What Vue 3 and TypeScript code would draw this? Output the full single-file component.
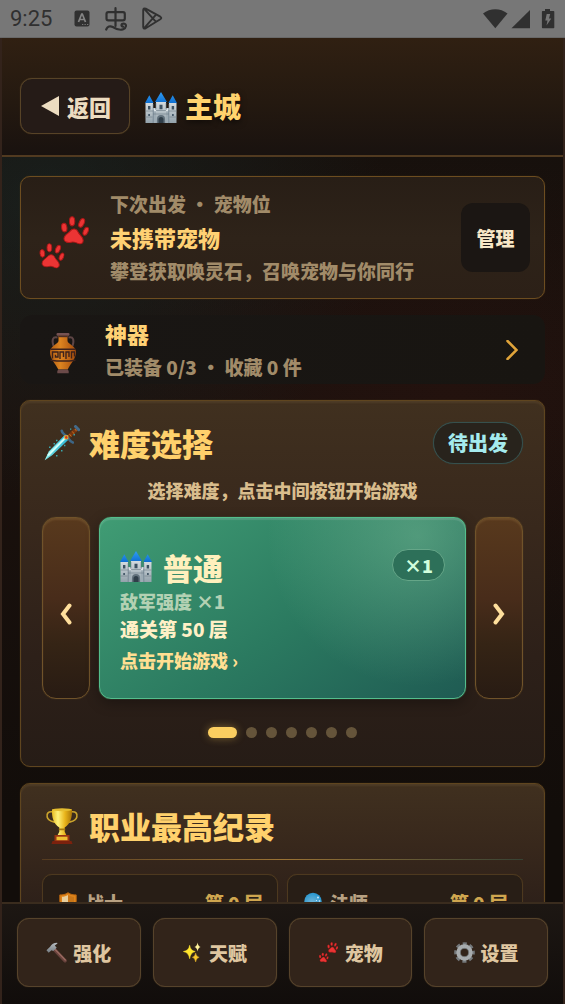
<script setup lang="ts">
import { ref } from 'vue'

interface NavItem {
  icon: string
  label: string
}
interface ClassRecord {
  icon: string
  name: string
  floor: number
}

const navItems: NavItem[] = [
  { icon: 'hammer', label: '强化' },
  { icon: 'sparkles', label: '天赋' },
  { icon: 'paws', label: '宠物' },
  { icon: 'gear', label: '设置' },
]
const records: ClassRecord[] = [
  { icon: 'shield', name: '战士', floor: 0 },
  { icon: 'orb', name: '法师', floor: 0 },
]
const slideCount = 7
const current = ref(0)

function move(step: number) {
  current.value = (current.value + step + slideCount) % slideCount
}
</script>

<template>
  <div class="screen">
    <svg class="sprite" aria-hidden="true">
      <defs>
        <linearGradient id="roof" x1="0" y1="0" x2="0" y2="1"><stop offset="0" stop-color="#2f9df5" /><stop offset="1" stop-color="#0f6fd0" /></linearGradient>
        <linearGradient id="stone" x1="0" y1="0" x2="0" y2="1"><stop offset="0" stop-color="#d3dade" /><stop offset="1" stop-color="#93a2ab" /></linearGradient>
        <linearGradient id="blade" x1="0" y1="1" x2="1" y2="0"><stop offset="0" stop-color="#a8fff3" /><stop offset="1" stop-color="#27b9e0" /></linearGradient>
        <linearGradient id="clay" x1="0" y1="0" x2="1" y2="0"><stop offset="0" stop-color="#b35c12" /><stop offset="0.4" stop-color="#dd8420" /><stop offset="1" stop-color="#a34a0c" /></linearGradient>
        <linearGradient id="gold" x1="0" y1="0" x2="1" y2="0"><stop offset="0" stop-color="#e8bc22" /><stop offset="0.3" stop-color="#fff27a" /><stop offset="0.65" stop-color="#e9b41a" /><stop offset="1" stop-color="#a87408" /></linearGradient>
        <linearGradient id="steel" x1="0" y1="0" x2="0" y2="1"><stop offset="0" stop-color="#b6bcc0" /><stop offset="1" stop-color="#747c82" /></linearGradient>
        <radialGradient id="orbFill" cx="0.45" cy="0.6" r="0.6"><stop offset="0" stop-color="#79b9d8" /><stop offset="1" stop-color="#2796cf" /></radialGradient>
      </defs>

      <symbol id="castle" viewBox="0 0 32 32">
        <rect x="7" y="16" width="18" height="15" fill="#9dabb4" />
        <rect x="0.5" y="11" width="7.5" height="20" fill="url(#stone)" />
        <rect x="24" y="11" width="7.5" height="20" fill="url(#stone)" />
        <rect x="11" y="10" width="10" height="21" fill="url(#stone)" />
        <path d="M0 11L4.3 3.3L8.6 11ZM23.4 11L27.7 3.3L32 11ZM10 10L16 0L22 10Z" fill="url(#roof)" />
        <path d="M8 17h1.5v1.5H11V17M21 17v1.5h1.5V17H24" stroke="#dde3e6" stroke-width="1.4" fill="none" />
        <path d="M0.5 19h7.5M24 19h7.5M11 18.5h10M0.5 25h7M24.5 25h7M8 22h16" stroke="#71808b" stroke-width="0.8" opacity="0.8" />
        <path d="M8.2 12v19M23.8 12v19M10.9 11v7M21.1 11v7" stroke="#627381" stroke-width="0.6" />
        <path d="M12 31v-4a4 4 0 0 1 8 0v4Z" fill="#62717c" />
        <path d="M13.5 31v-3.5a2.5 2.5 0 0 1 5 0V31Z" fill="#303e49" />
        <path d="M3 14h2.4v3.5H3ZM26.7 14h2.4v3.5h-2.4ZM14.5 12.8h3v4.5h-3ZM3.3 22h1.6v2H3.3ZM27.1 22h1.6v2h-1.6Z" fill="#3c5162" />
      </symbol>

      <symbol id="pawOne" viewBox="0 0 28 28">
        <g fill="#eb3434" stroke="#ad1717" stroke-width="1">
          <ellipse cx="3.7" cy="11.4" rx="2.6" ry="4.2" transform="rotate(-8 3.7 11.4)" />
          <ellipse cx="11.4" cy="5.2" rx="2.6" ry="4.5" />
          <ellipse cx="20.8" cy="6.8" rx="2.4" ry="4.5" transform="rotate(24 20.8 6.8)" />
          <ellipse cx="24.8" cy="15" rx="2.2" ry="4.2" transform="rotate(24 24.8 15)" />
          <path d="M9.500 14.800c2.600-3 6.400-2.400 7.800.9 1.100 2.800 5 4.800 5 8.300 0 2.700-2.300 4.100-4.700 3.100-2.500-1.200-4.500-1.900-7.100-1.300-3.300.8-7-.2-7.100-3.300-.1-4 4.100-5.200 6.100-7.700Z" />
        </g>
      </symbol>
      <symbol id="paws" viewBox="0 0 50 54">
        <use href="#pawOne" x="21.5" y="0" width="28.5" height="28.5" />
        <use href="#pawOne" x="0" y="27" width="25.5" height="25.5" />
      </symbol>

      <symbol id="amphora" viewBox="0 0 28 42">
        <path d="M8.500 5.500C3.500 4.300 2.600 8 4.500 14M19.500 5.500C24.500 4.300 25.400 8 23.500 14" fill="none" stroke="#5d4545" stroke-width="2" />
        <path d="M9.500 3.500h9v5.200c0 3.200 8.300 5 8.500 11.100.2 7-5.400 11.500-8.300 17.700H9.300C6.400 31.300.8 26.800 1 19.800 1.200 13.700 9.500 11.900 9.500 8.700Z" fill="url(#clay)" />
        <rect x="7.500" y="1" width="13" height="2.800" rx="1.200" fill="#765252" />
        <rect x="9.500" y="3.600" width="9" height="1.600" fill="#4b2d27" />
        <path d="M1.500 17.300h25M1.500 28.200q12.500 1.800 25 0" fill="none" stroke="#3d221c" stroke-width="1.500" />
        <path d="M3.500 26.500v-6.500h5.500v5H6.500v-2.300M11 27v-7h3.500v5M17 27v-7h3v5M22.500 26.500v-6.500h3v4.600" fill="none" stroke="#3d221c" stroke-width="1.400" />
        <path d="M9.300 37.500h9.400l1 1.500v2.200H8.300V39Z" fill="#6b4a49" />
      </symbol>

      <symbol id="dagger" viewBox="0 0 36 36">
        <path d="M0.700 35.300L4.800 26.400L20.200 10.600L24 15L8.300 30Z" fill="url(#blade)" />
        <path d="M0.700 35.300L22.300 12.600L24 15L8.300 30Z" fill="#2db1cc" opacity="0.500" />
        <path d="M4 30.500L21 13.200" stroke="#d1fff9" stroke-width="2" />
        <path d="M24.200 11.800L33.700 3.200" stroke="#76350e" stroke-width="3.600" />
        <path d="M25.400 9l2 2.500M28.200 6.400l2 2.500M31 4l1.500 2.200" stroke="#c56b21" stroke-width="1" />
        <path d="M17.700 5.700c.3 3.200 2.900 3.500 5.200 5.800s2.600 5 5.900 6" fill="none" stroke="#3d6686" stroke-width="2.600" stroke-linecap="round" />
        <path d="M31.500 1.500l3.200 3.200" stroke="#436b8a" stroke-width="3" stroke-linecap="round" />
        <rect x="20.300" y="10.300" width="4" height="4" fill="#f1b82e" /><circle cx="22.300" cy="12.400" r="1.300" fill="#d23720" />
        <path d="M5 21.500h1.600v1.600H5ZM12 14.800h1.500v1.500H12ZM9.500 18h1.500v1.500H9.500ZM17 25h1.500v1.500H17ZM12 30h1.500v1.500H12ZM29.500 9h1.400v1.400h-1.400ZM26 3.500h1.300v1.300H26ZM20 19.800h1.400v1.400H20Z" fill="#3ca8ac" />
      </symbol>

      <symbol id="trophy" viewBox="0 0 32 36">
        <path d="M7.500 4C2 3 .3 5.500 1.200 9.100c1 4.200 5.300 4.300 8.700 5.400M24.500 4C30 3 31.700 5.500 30.800 9.100c-1 4.200-5.300 4.300-8.700 5.400" fill="none" stroke="#caa32c" stroke-width="1.700" />
        <path d="M6 1.500h20c.4 7.700-1.600 14.500-7.300 18v4.200l2.100 4.400h-9.600l2.100-4.400v-4.200C7.600 16 5.600 9.200 6 1.500Z" fill="url(#gold)" />
        <ellipse cx="16" cy="1.700" rx="10" ry="1.500" fill="#e5bd2f" />
        <path d="M12.800 20.500h6.400v1.800h-6.400Z" fill="#a6780c" />
        <path d="M8.500 27h15v6.500h-15Z" fill="#9a3514" />
        <path d="M10.500 28.700h11v3.500h-11Z" fill="#eebf31" />
        <path d="M6.500 33h19l1 3h-21Z" fill="#7c210d" />
      </symbol>

      <symbol id="hammer" viewBox="0 0 22 22">
        <path d="M8.200 7.300L20 19.600" stroke="#68423c" stroke-width="3.600" stroke-linecap="round" />
        <path d="M8.600 6.800L20.200 18.800" stroke="#9a6a60" stroke-width="1.400" stroke-linecap="round" />
        <path d="M.5 8.700L4.300 4.900C6 2.400 8 .9 11.700.8L12 1.700 9.200 3.600 11.200 6 7.600 9.500 5.800 8.600 2.800 11.200Z" fill="url(#steel)" />
      </symbol>
      <symbol id="sparkles" viewBox="0 0 20 22">
        <path d="M7 3.500Q7.800 9 12.800 10Q7.800 11 7 17.500Q6.200 11 0.500 10Q6.200 9 7 3.500Z" fill="#ffe52d" stroke="#ffe52d" stroke-width="0.600" />
        <path d="M15.300 .5Q15.900 4.500 18.500 5.200Q15.900 6 15.300 10Q14.700 6 12 5.200Q14.700 4.500 15.300 .5Z" fill="#fff29b" />
        <path d="M13.300 11.500Q14 15.500 17 16Q14 16.700 13.300 21Q12.600 16.700 9.800 16Q12.600 15.500 13.300 11.500Z" fill="#f9c52c" stroke="#f9c52c" stroke-width="0.400" />
      </symbol>
      <symbol id="gear" viewBox="0 0 22 22">
        <circle cx="11" cy="11" r="9.200" fill="none" stroke="#74787b" stroke-width="3.200" stroke-dasharray="4.200 3.026" stroke-dashoffset="2.100" />
        <circle cx="11" cy="11" r="6.400" fill="none" stroke="#a7abad" stroke-width="4.400" />
        <circle cx="11" cy="11" r="4.300" fill="none" stroke="#6d7174" stroke-width="0.900" />
      </symbol>
      <symbol id="shield" viewBox="0 0 18 20">
        <path d="M9 .7C6.300 2.700 3.800 2.900.8 2.900v6.600c0 5.200 3.200 8.200 8.200 9.800 5-1.600 8.200-4.600 8.200-9.800V2.900C14.200 2.900 11.700 2.700 9 .7Z" fill="#df841b" stroke="#b9660f" />
        <path d="M9 3C7 4.300 5.300 4.700 3 4.800v5c0 3.700 2.200 6 6 7.400Z" fill="#e8cf9d" />
        <path d="M9 3c2 1.300 3.700 1.700 6 1.800v5c0 3.700-2.200 6-6 7.400Z" fill="#c97719" />
      </symbol>
      <symbol id="orb" viewBox="0 0 18 20">
        <circle cx="9" cy="9.500" r="8.700" fill="url(#orbFill)" />
        <circle cx="14" cy="5.500" r="0.900" fill="#d7efff" /><circle cx="15.500" cy="9" r="0.800" fill="#d7efff" /><circle cx="12.500" cy="8.500" r="0.600" fill="#d7efff" />
      </symbol>
    </svg>

    <div class="status">
      <span class="clock">9:25</span>
      <svg class="st-box" viewBox="0 0 16 17" aria-hidden="true">
        <rect x="0.500" y="0.500" width="15" height="16" rx="2" fill="#303030" />
        <path d="M4.500 12L7.700 4H8.300L11.500 12M5.700 9.500H10.300" fill="none" stroke="#858585" stroke-width="1.700" />
        <path d="M8 14.500h1.300M10.500 14.500h1.300M13 14.500h1.300" stroke="#757575" stroke-width="1" />
      </svg>
      <svg class="st-worm" viewBox="0 0 22 24" aria-hidden="true">
        <path d="M10.500 1.200V19M3.300 5.200H18Q19.800 5.200 19.800 7V11.600Q19.800 13.400 18 13.400H3.300Q1.500 13.400 1.500 11.600V7Q1.500 5.200 3.300 5.200Z" fill="none" stroke="#303030" stroke-width="2.200" stroke-linecap="round" />
        <path d="M1.200 22.500C2.500 19.500 5 18.500 7.800 20C11 22 14.700 23.700 18.200 22.200C21.500 20.800 22 16.800 18.800 16.500C16 16.500 15.800 19.500 18 19.600" fill="none" stroke="#303030" stroke-width="2.200" stroke-linecap="round" />
      </svg>
      <svg class="st-play" viewBox="0 0 21 23" aria-hidden="true">
        <path d="M1.200 3.200Q1.200.5 3.700 1.700L18.300 9.700Q20.300 11 18.300 12.300L3.700 21.300Q1.200 22.500 1.200 19.800ZM2 1.700L14 14.800M2 21.300L14 7.600" fill="none" stroke="#303030" stroke-width="1.900" stroke-linejoin="round" />
      </svg>
      <svg class="st-right" viewBox="0 0 72 20" aria-hidden="true">
        <path d="M0 4.500C7-1.200 17.500-1.200 24.500 4.500L12.300 19.300Z" fill="#303030" />
        <path d="M28.500 19.300L47 1V19.300Z" fill="#303030" />
        <path d="M62 0h5v2h3.500q.8 0 .8.800v15.700q0 .8-.8.800H59.700q-.8 0-.8-.8V2.800q0-.8.8-.8H62Z" fill="#303030" />
        <path d="M63.700 5h3.500l-1.200 4.500h2.300L63.500 16.500l1-5h-2.200Z" fill="#777" />
      </svg>
    </div>

    <div class="app">
      <header class="top">
        <button class="back" type="button">
          <svg class="tri" viewBox="0 0 18 20" aria-hidden="true"><path d="M18 0V20L0 10Z" fill="#ecdcc0" /></svg>
          返回
        </button>
        <h1><svg class="ico32" aria-hidden="true"><use href="#castle" /></svg>主城</h1>
      </header>

      <main>
        <section class="panel pet">
          <svg class="pet-ico" aria-hidden="true"><use href="#paws" /></svg>
          <div class="pet-copy">
            <p class="muted">下次出发 · 宠物位</p>
            <h2>未携带宠物</h2>
            <p class="muted">攀登获取唤灵石，召唤宠物与你同行</p>
          </div>
          <button class="manage" type="button">管理</button>
        </section>

        <button class="relic" type="button">
          <svg class="relic-ico" aria-hidden="true"><use href="#amphora" /></svg>
          <span class="relic-copy">
            <strong>神器</strong>
            <span class="muted">已装备 0/3 · 收藏 0 件</span>
          </span>
          <svg class="go" viewBox="0 0 12 20" aria-hidden="true"><path d="M1.500 1L10.500 10L1.500 19" fill="none" stroke="#e0a43a" stroke-width="2.500" stroke-linecap="round" /></svg>
        </button>

        <section class="panel rich">
          <div class="head">
            <h2><svg class="ico36" aria-hidden="true"><use href="#dagger" /></svg>难度选择</h2>
            <span class="state">待出发</span>
          </div>
          <p class="hint">选择难度，点击中间按钮开始游戏</p>
          <div class="carousel">
            <button class="arrow" type="button" aria-label="上一个" @click="move(-1)">
              <svg viewBox="0 0 12 22" aria-hidden="true"><path d="M9.500 2.500L3 11L9.500 19.500" fill="none" stroke="#ffdf9c" stroke-width="4" stroke-linecap="round" /></svg>
            </button>
            <button class="mode" type="button">
              <span class="mode-head">
                <svg class="ico32" aria-hidden="true"><use href="#castle" /></svg>
                <span class="mode-name">普通</span>
                <span class="times">×1</span>
              </span>
              <span class="mode-power">敌军强度 ×1</span>
              <span class="mode-goal">通关第 50 层</span>
              <span class="mode-start">点击开始游戏 ›</span>
            </button>
            <button class="arrow" type="button" aria-label="下一个" @click="move(1)">
              <svg viewBox="0 0 12 22" aria-hidden="true"><path d="M2.500 2.500L9 11L2.500 19.500" fill="none" stroke="#ffdf9c" stroke-width="4" stroke-linecap="round" /></svg>
            </button>
          </div>
          <div class="dots">
            <i v-for="n in slideCount" :key="n" :class="{ on: n - 1 === current }"></i>
          </div>
        </section>

        <section class="panel rich">
          <div class="head">
            <h2><svg class="ico36" aria-hidden="true"><use href="#trophy" /></svg>职业最高纪录</h2>
          </div>
          <div class="rule"></div>
          <ul class="records">
            <li v-for="r in records" :key="r.name">
              <svg class="rec-ico" aria-hidden="true"><use :href="'#' + r.icon" /></svg>
              <span class="rec-name">{{ r.name }}</span>
              <span class="rec-floor">第 {{ r.floor }} 层</span>
            </li>
          </ul>
        </section>
      </main>

      <nav>
        <button v-for="item in navItems" :key="item.label" type="button">
          <svg class="nav-ico" aria-hidden="true"><use :href="'#' + item.icon" /></svg>{{ item.label }}
        </button>
      </nav>
    </div>
  </div>
</template>

<style>
body {
  margin: 0;
  background: #120d0a;
}
</style>

<style scoped>
* {
  box-sizing: border-box;
}
.screen {
  height: 100vh;
  display: flex;
  flex-direction: column;
  overflow: hidden;
  font-family: "Noto Sans CJK SC", "Noto Sans", sans-serif;
  font-weight: 900;
  font-size: 19px;
}
.sprite {
  position: absolute;
  width: 0;
  height: 0;
}
h1, h2, p, ul {
  margin: 0;
  padding: 0;
}
button {
  font: inherit;
  color: inherit;
  margin: 0;
  padding: 0;
  border: 0;
  cursor: pointer;
}
svg {
  flex: none;
  display: block;
}
.status {
  flex: none;
  height: 38px;
  display: flex;
  align-items: center;
  padding: 0 10px;
  background: #777;
  border-bottom: 1px solid #686868;
  color: #303030;
}
.clock {
  width: 64px;
  font: 400 22px/38px Roboto, sans-serif;
}
.st-box { width: 16px; height: 17px; }
.st-worm { width: 22px; height: 24px; margin-left: 15px; }
.st-play { width: 21px; height: 23px; margin-left: 15px; }
.st-right { width: 72px; height: 20px; margin-left: auto; }

.app {
  flex: 1;
  min-height: 0;
  display: flex;
  flex-direction: column;
  border: solid #33231b;
  border-width: 0 2px;
  background:
    radial-gradient(ellipse 340px 300px at 8% 17%, rgba(30, 60, 60, 0.32), transparent),
    radial-gradient(ellipse 340px 240px at 80% 37%, rgba(72, 22, 18, 0.18), transparent),
    linear-gradient(#15100c, #1b110d 38%, #120d0a 80%);
}
.top {
  flex: none;
  display: flex;
  align-items: center;
  gap: 15px;
  padding: 40px 18px 21px;
  border-bottom: 2px solid #513a20;
  background: linear-gradient(#302012, #241910 55%, #19120f);
}
.back {
  height: 56px;
  display: flex;
  align-items: center;
  gap: 8px;
  padding: 0 18px 0 20px;
  border: 1px solid #574327;
  border-radius: 12px;
  background: #251b17;
  box-shadow: 0 0 1px #574327;
  color: #ecdcc0;
  font-size: 22px;
}
.tri { width: 18px; height: 20px; }
h1 {
  display: flex;
  align-items: center;
  gap: 8px;
  font-size: 28px;
  font-weight: 900;
  line-height: 40px;
  color: #ffd36e;
  text-shadow: 0 2px 6px rgba(0, 0, 0, 0.6);
}
h1 .ico32 { margin-top: 4px; }
.ico32 { width: 32px; height: 32px; }
.ico36 { width: 36px; height: 36px; }

main {
  flex: 1;
  min-height: 0;
  overflow-y: auto;
  scrollbar-width: none;
  padding: 19px 18px;
  display: flex;
  flex-direction: column;
  gap: 16px;
}
main > * {
  flex: none;
}
.panel {
  border: 1px solid #5f451f;
  border-radius: 10px;
  box-shadow: 0 0 1px #5f451f;
}
.muted {
  color: #a18b69;
  font-weight: 900;
}
.pet {
  display: flex;
  align-items: center;
  padding: 10px 14px 10px 18px;
  background: linear-gradient(#281e16, #2e2319 50%, #2c2017);
  border-color: #6d4d20;
}
.pet-ico { width: 50px; height: 54px; margin: 10px 21px 0 0; }
.pet-copy {
  flex: 1;
  line-height: 34px;
}
.pet-copy h2 {
  font-size: 22px;
  font-weight: 900;
  line-height: 33px;
  color: #ffd174;
}
.manage {
  width: 69px;
  height: 69px;
  border-radius: 12px;
  background: #1b1613;
  color: #f8e7c7;
}
.relic {
  display: flex;
  align-items: center;
  height: 69px;
  padding: 0 27px 0 29px;
  border-radius: 12px;
  background: linear-gradient(90deg, #191614, #181511);
  text-align: left;
}
.relic-ico { width: 28px; height: 42px; margin: 6px 28px 0 0; }
.relic-copy {
  flex: 1;
  display: grid;
  gap: 4px;
  line-height: 30px;
}
.relic-copy strong {
  font-size: 22px;
  font-weight: 900;
  color: #ffd174;
}
.go { width: 12px; height: 20px; }

.rich {
  padding: 21px 21px 28px;
  background: linear-gradient(#40301f, #38281c 35%, #2d2019 70%, #261c16);
  box-shadow: inset 0 2px 2px rgba(255, 210, 130, 0.08), 0 0 1px #5f451f;
}
.head {
  display: flex;
  align-items: center;
  justify-content: space-between;
  height: 42px;
}
.head h2 {
  display: flex;
  align-items: center;
  gap: 9px;
  padding-left: 2px;
  font-size: 31px;
  font-weight: 900;
  line-height: 42px;
  color: #ffd16c;
}
.state {
  padding: 0 14px;
  border: 1px solid #36504d;
  border-radius: 21px;
  background: #28231c;
  box-shadow: 0 0 1px #36504d;
  color: #a5ebee;
  font-size: 20px;
  line-height: 40px;
}
.hint {
  margin: 13px 0 14px;
  font-size: 18px;
  line-height: 26px;
  text-align: center;
  color: #d9bd8d;
}
.carousel {
  display: grid;
  grid-template-columns: 48px 1fr 48px;
  gap: 9px;
  height: 182px;
}
.arrow {
  display: flex;
  align-items: center;
  justify-content: center;
  padding-top: 12px;
  border: 1px solid #70532a;
  border-radius: 14px;
  background: linear-gradient(#58391d, #482c1a 45%, #352415 70%, #281b13);
  box-shadow: inset 0 2px 2px rgba(255, 210, 130, 0.12), 0 0 1px #70532a;
}
.arrow svg { width: 12px; height: 22px; }
.mode {
  display: flex;
  flex-direction: column;
  padding: 27px 20px 20px;
  border: 1px solid #54be8c;
  border-radius: 12px;
  background:
    radial-gradient(circle 150px at 87% 10%, rgba(138, 202, 164, 0.4), transparent),
    linear-gradient(145deg, #409c74, #2b7a60 55%, #1f5b53);
  box-shadow: inset 0 2px 1px rgba(255, 255, 255, 0.12), 0 0 1px #54be8c, 0 4px 14px rgba(0, 0, 0, 0.32);
  text-align: left;
}
.mode-head {
  display: flex;
  align-items: center;
  gap: 11px;
  height: 44px;
}
.mode-name {
  flex: 1;
  font-size: 30px;
  line-height: 44px;
  color: #fff0bd;
}
.times {
  margin-bottom: 4px;
  padding: 0 11px;
  border: 1px solid #65a688;
  border-radius: 16px;
  background: #2d7059;
  color: #d1ffdd;
  font-size: 18px;
  line-height: 30px;
}
.mode-power {
  font-size: 18px;
  line-height: 24px;
  color: #b3d1b3;
}
.mode-goal {
  line-height: 32px;
  color: #fff0c6;
}
.mode-start {
  font-size: 18px;
  line-height: 30px;
  color: #ffdf92;
}
.dots {
  display: flex;
  justify-content: center;
  gap: 9px;
  margin-top: 28px;
}
.dots i {
  width: 11px;
  height: 11px;
  border-radius: 6px;
  background: #65543a;
}
.dots .on {
  width: 29px;
  background: #fbce60;
  box-shadow: 0 0 9px rgba(251, 206, 96, 0.4);
}
.rule {
  height: 1px;
  margin: 12px 0 14px;
  background: linear-gradient(90deg, #553b20, #9b7334 50%, #374234);
}
.records {
  display: grid;
  grid-template-columns: 1fr 1fr;
  gap: 9px;
  list-style: none;
}
.records li {
  display: flex;
  align-items: center;
  height: 56px;
  padding: 0 14px 0 16px;
  border: 1px solid #4d391f;
  border-radius: 10px;
  background: #281e16;
  box-shadow: 0 0 1px #4d391f;
}
.rec-ico { width: 18px; height: 20px; margin-right: 8px; }
.rec-name {
  flex: 1;
  color: #b8a182;
}
.rec-floor {
  color: #cfa64f;
}
nav {
  flex: none;
  display: grid;
  grid-template-columns: repeat(4, 1fr);
  gap: 12px;
  padding: 14px 15px 17px;
  border-top: 2px solid #3a2c1e;
  background: linear-gradient(#1d1713, #110d0b);
}
nav button {
  display: flex;
  align-items: center;
  justify-content: center;
  gap: 6px;
  height: 69px;
  border: 1px solid #56432b;
  border-radius: 12px;
  background: #32241a;
  box-shadow: 0 0 1px #56432b;
  color: #dfc6a0;
}
.nav-ico { width: 21px; height: 21px; }
</style>
